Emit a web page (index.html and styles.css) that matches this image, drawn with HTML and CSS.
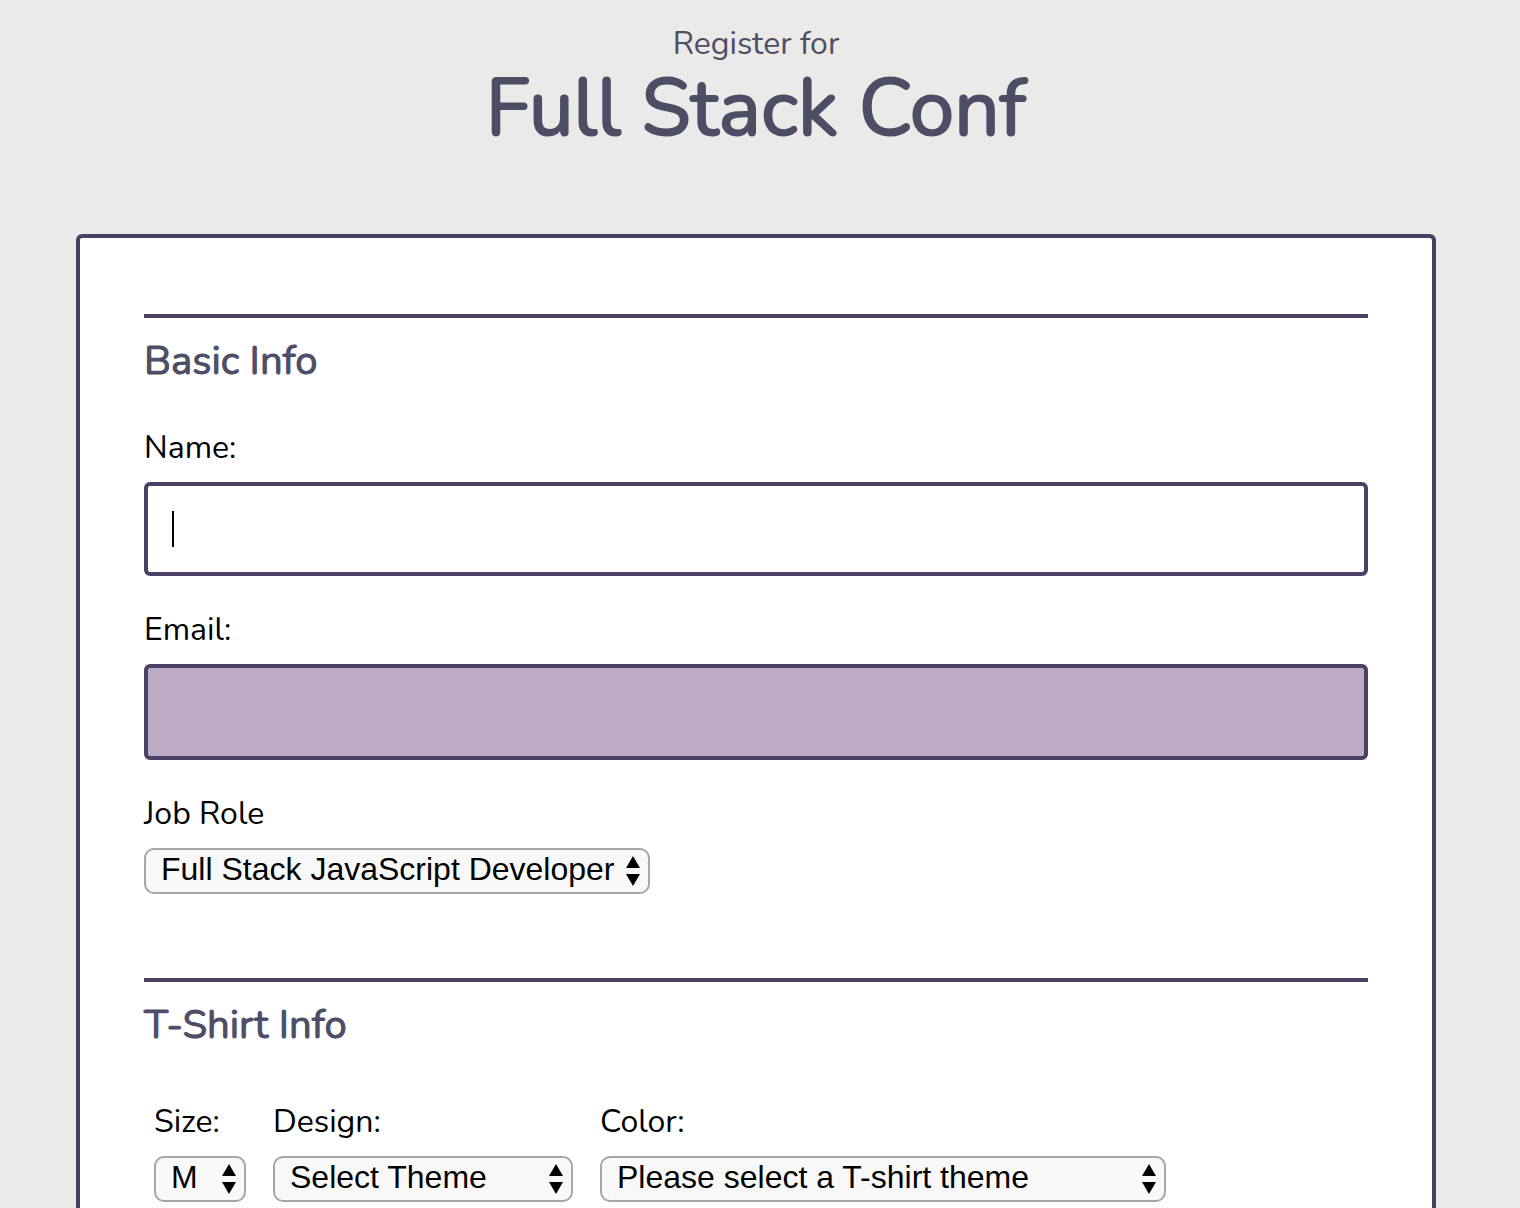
FILE: index.html
```html
<!DOCTYPE html>
<html lang="en">
<head>
  <meta charset="utf-8">
  <meta name="viewport" content="width=device-width, initial-scale=1">
  <title>Register for Full Stack Conf</title>
  <link rel="stylesheet" href="styles.css">
</head>
<body>
  <header class="page-header">
    <p class="page-kicker">Register for</p>
    <h1 class="page-title">Full Stack Conf</h1>
  </header>
  <main>
    <form class="card">
      <fieldset class="section">
        <legend class="section-title">Basic Info</legend>
        <div class="field">
          <label for="name">Name:</label>
          <input class="text-input" type="text" id="name" name="user_name" autofocus>
        </div>
        <div class="field">
          <label for="mail">Email:</label>
          <input class="text-input text-input-filled" type="email" id="mail" name="user_email">
        </div>
        <div class="field">
          <label for="title">Job Role</label>
          <span class="select select-role">
            <select id="title" name="user_title"><option>Full Stack JavaScript Developer</option></select>
            <svg class="arrows" viewBox="0 0 16 30" aria-hidden="true"><path d="M8 0 15 12H1ZM1 18H15L8 30Z"/></svg>
          </span>
        </div>
      </fieldset>
      <fieldset class="section">
        <legend class="section-title">T-Shirt Info</legend>
        <div class="shirt-row">
          <div class="field">
            <label for="size">Size:</label>
            <span class="select select-size">
              <select id="size" name="user_size"><option>M</option></select>
              <svg class="arrows" viewBox="0 0 16 30" aria-hidden="true"><path d="M8 0 15 12H1ZM1 18H15L8 30Z"/></svg>
            </span>
          </div>
          <div class="field">
            <label for="design">Design:</label>
            <span class="select select-design">
              <select id="design" name="user_design"><option>Select Theme</option></select>
              <svg class="arrows" viewBox="0 0 16 30" aria-hidden="true"><path d="M8 0 15 12H1ZM1 18H15L8 30Z"/></svg>
            </span>
          </div>
          <div class="field">
            <label for="color">Color:</label>
            <span class="select select-color">
              <select id="color" name="user_color"><option>Please select a T-shirt theme</option></select>
              <svg class="arrows" viewBox="0 0 16 30" aria-hidden="true"><path d="M8 0 15 12H1ZM1 18H15L8 30Z"/></svg>
            </span>
          </div>
        </div>
      </fieldset>
    </form>
  </main>
</body>
</html>
```
FILE: styles.css
```css
* {
  box-sizing: border-box;
}

body {
  margin: 0;
  padding: 0 84px 0 76px;
  background: #ebeae8;
  color: #000;
  font-family: Nunito, Lato, sans-serif;
  font-size: 32px;
  line-height: 40px;
}

.page-header {
  padding: 24px 0 80px;
  color: #4e4d66;
  text-align: center;
}

.page-kicker {
  margin: 0;
}

.page-title {
  margin: 0;
  font-size: 80px;
  line-height: 90px;
  font-weight: 400;
  -webkit-text-stroke: 2px #4e4d66;
}

.card {
  padding: 76px 64px 6px;
  border: 4px solid #4a4064;
  border-bottom: 0;
  border-radius: 6px 6px 0 0;
  background: #fff;
}

.section {
  display: flex;
  flex-direction: column;
  gap: 34px;
  min-width: 0;
  margin: 0;
  padding: 18px 0 0;
  border: 0;
  border-top: 4px solid #4a4064;
}

.section + .section {
  margin-top: 84px;
}

.section-title {
  float: left;
  margin-bottom: 8px;
  padding: 0;
  color: #4e4d66;
  font-size: 40px;
  line-height: 50px;
  font-weight: 400;
  -webkit-text-stroke: 1px #4e4d66;
}

.field {
  display: flex;
  flex-direction: column;
  align-items: flex-start;
  gap: 14px;
}

.text-input {
  width: 100%;
  height: 94px;
  padding: 0 24px;
  border: 4px solid #4a4064;
  border-radius: 6px;
  outline: 0;
  background: #fff;
  font: inherit;
}

.text-input-filled {
  height: 96px;
  background: #beacc6;
}

/* Text cursor, two pixels wide */
.text-input:focus {
  background: linear-gradient(#000, #000) 24px center / 2px 36px no-repeat #fff;
  caret-color: transparent;
}

.select {
  display: grid;
  align-items: center;
  max-width: 100%;
}

.select select,
.arrows {
  grid-area: 1 / 1;
}

.select select {
  width: 100%;
  height: 46px;
  padding: 0 28px 4px 15px;
  border: 2px solid #a6a6a6;
  border-radius: 10px;
  background: #f8f8f8;
  color: #000;
  font: 32px/38px "Liberation Sans", Arial, sans-serif;
  appearance: none;
}

.arrows {
  justify-self: end;
  width: 16px;
  height: 30px;
  margin-right: 9px;
  pointer-events: none;
}

.select-role {
  width: 506px;
}

.select-size {
  width: 92px;
}

.select-design {
  width: 300px;
}

.select-color {
  width: 566px;
}

.shirt-row {
  display: flex;
  flex-wrap: wrap;
  gap: 27px;
  padding: 10px 10px 0;
}
```
